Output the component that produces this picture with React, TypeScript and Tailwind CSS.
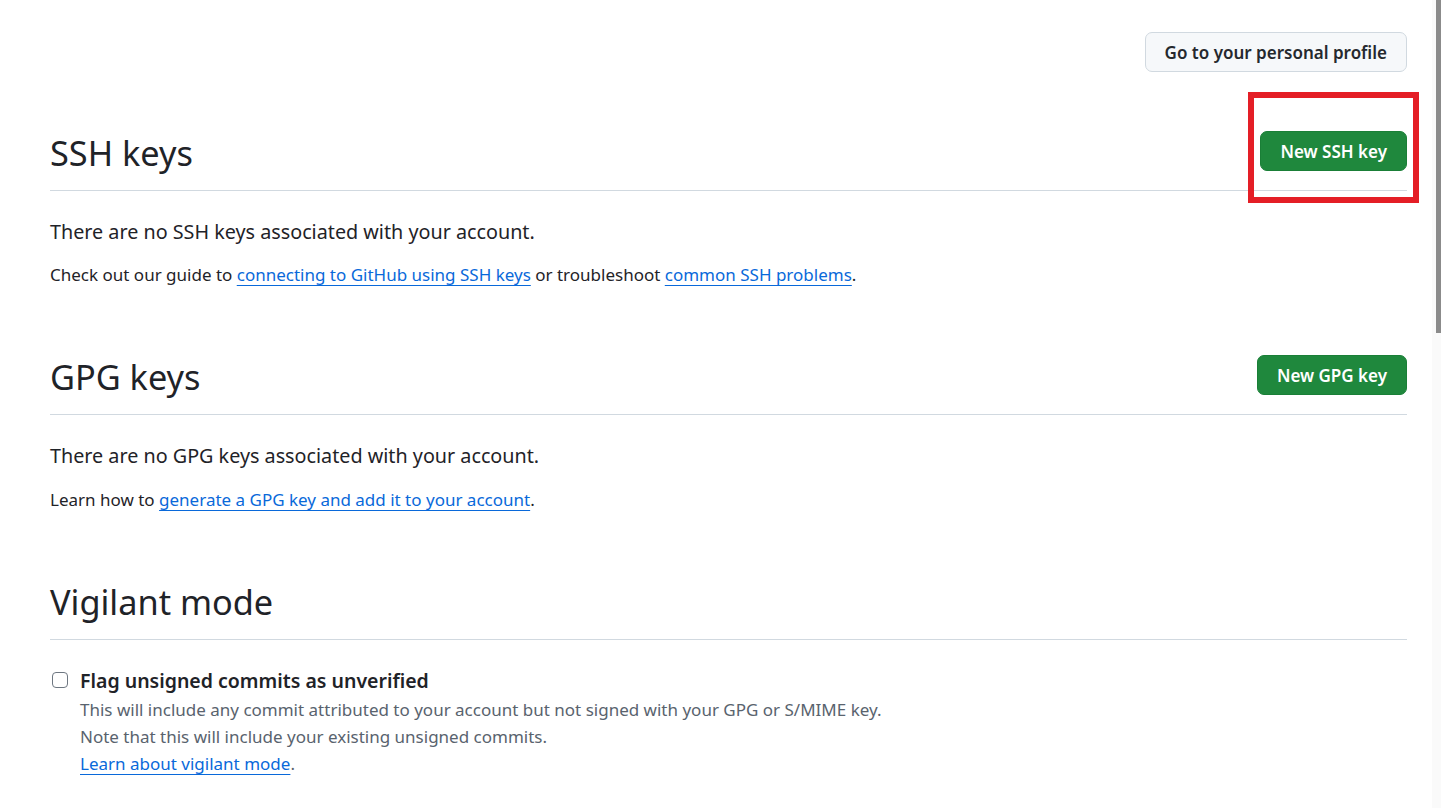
import React from "react";

const SectionHeading = ({ title, action }: { title: string; action?: React.ReactNode }) => (
  <div className="flex h-[40px] items-center justify-between box-content pb-[19px] border-b border-[#d1d9e0]">
    <h2 className="mt-[4px] text-[34.3px] font-normal leading-none text-[#1f2328]">{title}</h2>
    {action}
  </div>
);

const GreenButton = ({ children }: { children: React.ReactNode }) => (
  <button className="h-[40px] px-[19px] rounded-[7px] bg-[#1f883d] border border-[#1a7f37] text-white text-[17px] font-semibold leading-none">
    {children}
  </button>
);

const Link = ({ children }: { children: React.ReactNode }) => (
  <a href="#" className="text-[#0969da] underline underline-offset-[4px] decoration-[1px]">
    {children}
  </a>
);

export default function App() {
  return (
    <div className="relative flex min-h-[808px] bg-white font-['Noto_Sans',sans-serif] text-[#1f2328]">
      <main className="flex-1 pl-[50px] pr-[25px] pt-[32px]">
        <div className="flex justify-end">
          <button className="h-[40px] px-[19px] rounded-[7px] bg-[#f6f8fa] border border-[#d1d9e0] text-[17px] font-semibold leading-none text-[#25292e]">
            Go to your personal profile
          </button>
        </div>

        {/* SSH keys */}
        <section className="mt-[59px]">
          <SectionHeading title="SSH keys" action={<GreenButton>New SSH key</GreenButton>} />
          <p className="mt-[26px] text-[19.75px] leading-[30px]">There are no SSH keys associated with your account.</p>
          <p className="mt-[14px] text-[17px] leading-[27px]">
            Check out our guide to <Link>connecting to GitHub using SSH keys</Link> or troubleshoot{" "}
            <Link>common SSH problems</Link>.
          </p>
        </section>

        {/* GPG keys */}
        <section className="mt-[67px]">
          <SectionHeading title="GPG keys" action={<GreenButton>New GPG key</GreenButton>} />
          <p className="mt-[26px] text-[19.75px] leading-[30px]">There are no GPG keys associated with your account.</p>
          <p className="mt-[15px] text-[17px] leading-[27px]">
            Learn how to <Link>generate a GPG key and add it to your account</Link>.
          </p>
        </section>

        {/* Vigilant mode */}
        <section className="mt-[67px]">
          <SectionHeading title="Vigilant mode" />
          <div className="mt-[26px] flex gap-[12px]">
            <div className="mt-[6px] ml-[2px] h-[16px] w-[16px] shrink-0 rounded-[4px] border-[1.5px] border-[#6e7781] bg-white" />
            <div>
              <div className="text-[19.5px] font-semibold leading-[30px]">Flag unsigned commits as unverified</div>
              <div className="text-[17px] leading-[27px] text-[#59636e]">
                <p>This will include any commit attributed to your account but not signed with your GPG or S/MIME key.</p>
                <p>Note that this will include your existing unsigned commits.</p>
                <p>
                  <Link>Learn about vigilant mode</Link>.
                </p>
              </div>
            </div>
          </div>
        </section>
      </main>

      {/* scrollbar */}
      <div className="w-[9px] shrink-0 bg-[#fafafa] flex justify-end">
        <div className="h-[333px] w-[5px] bg-[#8b8b8b]" />
      </div>

      {/* annotation highlight */}
      <div className="pointer-events-none absolute left-[1248px] top-[92px] h-[111px] w-[171px] border-[6px] border-[#e41e26]" />
    </div>
  );
}
